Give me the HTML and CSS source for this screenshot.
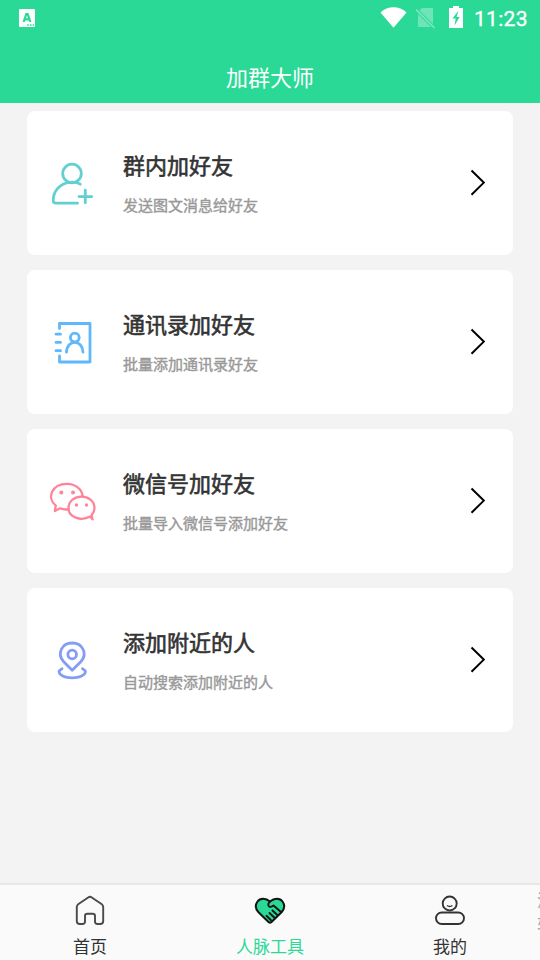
FILE: index.html
```html
<!DOCTYPE html>
<html lang="zh-CN">
<head>
<meta charset="utf-8">
<title>加群大师</title>
<link rel="stylesheet" href="styles.css">
</head>
<body>
<div class="app">
  <header class="header">
    <div class="status">
      <svg class="ime" width="16" height="18" viewBox="0 0 16 18"><rect width="16" height="18" rx="1" fill="#fff"/><path d="M4.6 13 7.3 5.2h1.4L11.400 13M5.700 10.300h4.600" fill="none" stroke="#2ad996" stroke-width="2.200"/><path d="M8.200 16h1.600M11 16h1.600M13.600 16h1.400" stroke="#2ad996" stroke-width="1.400"/></svg>
      <svg class="signals" width="90" height="36" viewBox="0 0 90 36">
        <path d="M.5 12.500C7.500 5.500 19.500 5.500 26.500 12.500L13.500 27.800Z" fill="#fff"/>
        <path d="M42 8h11v19H38V12z" fill="#fff" opacity=".32"/>
        <path d="M36 9.500 54.500 28" stroke="#2ad996" stroke-width="3.500"/>
        <path d="M36 9.500 54.500 28" stroke="#fff" stroke-width="1.700" opacity=".4"/>
        <path d="M69 8h4V6h6v2h4v20H69z" fill="#fff"/>
        <path d="M78.500 10.500 72.500 18.500h3.200l-1.200 7 5.200-8.500h-3.200z" fill="#2ad996"/>
      </svg>
      <span class="clock">11:23</span>
    </div>
    <h1 class="title">加群大师</h1>
  </header>

  <main class="list">
    <section class="card">
      <svg class="icon teal" viewBox="0 -2 70 70"><circle cx="32" cy="23.500" r="9.300"/><path d="M40.300 34.200C37.500 32.300 34 32 30 32.300 19.500 33.300 13.200 41.500 13.200 50.500Q13.200 53.200 16 53.200H37.500M45.300 40.200V52.800M39 46.600H51.800"/></svg>
      <div class="text"><h2>群内加好友</h2><p>发送图文消息给好友</p></div>
      <svg class="arrow" viewBox="0 0 16 28"><path d="M1.500 1.500 13.800 13.600 1.500 25.700"/></svg>
    </section>
    <section class="card">
      <svg class="icon blue" viewBox="0 -3 70 70"><path d="M19.500 18.500V13.500H50V52H19.500V46M16 24.200H20.500M16 32.400H20.500M16 40.700H20.500"/><circle cx="34.800" cy="27.600" r="4.400"/><path d="M26.500 42.200C27 29 42.500 29 43 42.200"/></svg>
      <div class="text"><h2>通讯录加好友</h2><p>批量添加通讯录好友</p></div>
      <svg class="arrow" viewBox="0 0 16 28"><path d="M1.500 1.500 13.800 13.600 1.500 25.700"/></svg>
    </section>
    <section class="card">
      <svg class="icon pink" viewBox="0 -4 70 70"><path d="M28.500 39.300Q24 40 20.200 38.300L14.800 41 15.800 35.600C6.500 28 11.500 13.800 27 13.800 35 13.800 42.300 19 42.600 26.500"/><path d="M50 46.600C41 51.500 28.500 47.500 28.500 38 28.500 31 35 26.700 41.500 26.700S54.500 31 54.500 38Q54.500 42 51.700 45L52.500 49.300Z"/><g class="dots"><circle cx="21.300" cy="22.600" r="2"/><circle cx="33" cy="22.600" r="2"/><circle cx="36.500" cy="35" r="1.700"/><circle cx="46.500" cy="35" r="1.700"/></g></svg>
      <div class="text"><h2>微信号加好友</h2><p>批量导入微信号添加好友</p></div>
      <svg class="arrow" viewBox="0 0 16 28"><path d="M1.500 1.500 13.800 13.600 1.500 25.700"/></svg>
    </section>
    <section class="card">
      <svg class="icon violet" viewBox="0 0 70 70"><path d="M32.200 45.300 23.500 36.500C16.500 28.500 22 18 32.200 18S48 28.500 41 36.500Z"/><circle cx="32.200" cy="29.500" r="4.300"/><path d="M22 43.700C14 48 24 52.800 32.200 52.800S50.500 48 42.500 43.700"/></svg>
      <div class="text"><h2>添加附近的人</h2><p>自动搜索添加附近的人</p></div>
      <svg class="arrow" viewBox="0 0 16 28"><path d="M1.500 1.500 13.800 13.600 1.500 25.700"/></svg>
    </section>
  </main>

  <nav class="tabs">
    <a class="tab">
      <svg viewBox="0 0 40 36"><path d="M20 3.800Q20.800 3.800 21.800 4.500L31.500 11Q33.200 12.200 33.200 14V28Q33.200 31 30.200 31H27.500Q25 31 25 28.500V23Q25 20.700 22.700 20.700H17.300Q15 20.700 15 23V28.500Q15 31 12.500 31H9.800Q6.800 31 6.800 28V14Q6.800 12.200 8.500 11L18.200 4.500Q19.200 3.800 20 3.800Z" fill="none" stroke="#4a4a4a" stroke-width="1.900"/></svg>
      <span>首页</span>
    </a>
    <a class="tab active">
      <svg viewBox="0 0 40 36"><path d="M20 8.500C15.500 4.500 10 5 7.500 8.500 5 12 5.500 16 8.500 19.200L18.500 29Q20 30.200 21.500 29L31.500 19.200C34.500 16 35 12 32.500 8.500 30 5 24.500 4.500 20 8.500Z" fill="#2ad996" stroke="#101514" stroke-width="2" stroke-linejoin="round"/><path d="M20 8.500C18.500 10 17.800 12 19 13.300 20.500 14.800 22 13.500 23.500 12.500L31.300 19.200M22.500 17.500 27 21.800M19.500 20 24.500 24.800M16.500 22.800 21 27.200" fill="none" stroke="#101514" stroke-width="1.900" stroke-linecap="round" stroke-linejoin="round"/></svg>
      <span>人脉工具</span>
    </a>
    <a class="tab">
      <svg viewBox="0 0 40 36"><g fill="none" stroke="#333" stroke-width="1.900"><circle cx="19.700" cy="10.500" r="7"/><rect x="6" y="19.500" width="28" height="11.500" rx="5.750"/><path d="M17 12.500Q19.700 14.500 22.400 12.500" stroke-width="1.500"/></g></svg>
      <span>我的</span>
    </a>
    <div class="overflow">添<br>软</div>
  </nav>
</div>
</body>
</html>
```

FILE: styles.css
```css
* { box-sizing: border-box; margin: 0; }
body { font-family: Roboto, "Noto Sans CJK SC", sans-serif; background: #f3f3f3; }
.app { width: 540px; height: 960px; display: flex; flex-direction: column; overflow: hidden; }
.header { height: 103px; background: #2ad996; color: #fff; }
.status { height: 36px; display: flex; align-items: center; padding: 0 12px 0 19px; }
.signals { margin-left: auto; }
.clock { font-size: 21px; font-weight: 400; line-height: 36px; width: 54px; margin-left: 4px; letter-spacing: .3px; white-space: nowrap; padding-top: 2px; -webkit-text-stroke: .3px #fff; }
.title { font-size: 22px; font-weight: 400; text-align: center; line-height: 32px; margin-top: 27px; }
.list { flex: 1; display: flex; flex-direction: column; gap: 15px; padding: 8px 27px 0; }
.card { height: 144px; flex: none; background: #fff; border-radius: 8px; display: flex; align-items: center; padding: 0 27px 0 13px; }
.icon { width: 70px; height: 70px; fill: none; stroke-width: 2.800; stroke-linecap: round; stroke-linejoin: round; }
.teal { stroke: #62d0d0; }
.blue { stroke: #5fb8fb; }
.pink { stroke: #ff8499; stroke-width: 2.300; }
.violet { stroke: #859cf4; }
.dots { fill: #ff8499; stroke: none; }
.text { flex: 1; margin-left: 13px; padding-top: 2px; }
.text h2 { font-size: 22px; font-weight: 400; line-height: 32px; color: #333; -webkit-text-stroke: .6px #333; }
.text p { font-size: 15px; line-height: 22px; margin-top: 12px; color: #999; -webkit-text-stroke: .4px #999; }
.arrow { width: 16px; height: 28px; fill: none; stroke: #000; stroke-width: 2; }
.tabs { position: relative; height: 77px; background: #fafafa; border-top: 2px solid #e7e7e7; display: flex; overflow: hidden; }
.tab { width: 180px; display: flex; flex-direction: column; align-items: center; padding-top: 8px; color: #333; font-size: 17px; line-height: 24px; }
.tab svg { width: 40px; height: 36px; }
.tab span { margin-top: 6px; }
.tab.active { color: #2ad996; }
.overflow { position: absolute; left: 537px; top: 4px; width: 20px; font-size: 17px; line-height: 24px; color: #aaa; }
```
